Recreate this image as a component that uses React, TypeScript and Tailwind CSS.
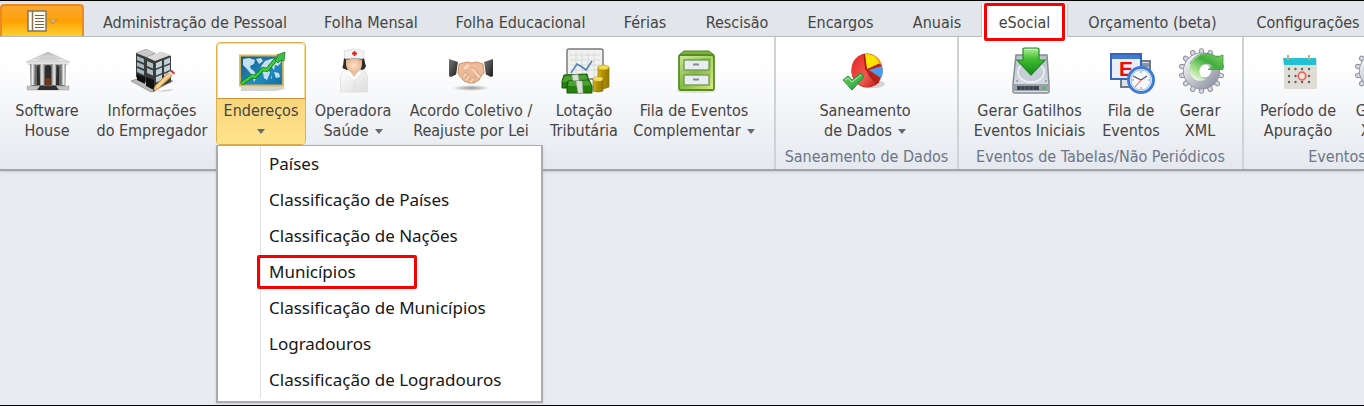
import type { ReactNode } from "react";
import clsx from "clsx";

const tabs = [
  { label: "Administração de Pessoal", width: "w-[220px]" },
  { label: "Folha Mensal", width: "w-[132px]" },
  { label: "Folha Educacional", width: "w-[167px]" },
  { label: "Férias", width: "w-[82px]" },
  { label: "Rescisão", width: "w-[102px]" },
  { label: "Encargos", width: "w-[105px]" },
  { label: "Anuais", width: "w-[88px]" },
  { label: "eSocial", width: "w-[87px]", active: true },
  { label: "Orçamento (beta)", width: "w-[169px]" },
  { label: "Configurações", width: "w-[142px]" },
];

const menuItems = [
  "Países",
  "Classificação de Países",
  "Classificação de Nações",
  "Municípios",
  "Classificação de Municípios",
  "Logradouros",
  "Classificação de Logradouros",
];

function Svg({ children }: { children: ReactNode }) {
  return (
    <svg width="48" height="48" viewBox="0 0 48 48" className="overflow-visible" aria-hidden="true">
      {children}
    </svg>
  );
}

function BankIcon() {
  return (
    <Svg>
      <defs>
        <linearGradient id="column" x1="0" x2="1">
          <stop offset="0" stopColor="#777" />
          <stop offset=".5" stopColor="#ececec" />
          <stop offset="1" stopColor="#8a8a8a" />
        </linearGradient>
        <linearGradient id="roof" x1="0" y1="0" x2="0" y2="1">
          <stop offset="0" stopColor="#b5b5b5" />
          <stop offset="1" stopColor="#f0f0f0" />
        </linearGradient>
      </defs>
      <path d="M8 17h34v23H8z" fill="#6b6b6b" />
      <path d="M14 20q3-5 6 0v18h-6zM22 20q3-5 6 0v18h-6zM30 20q3-5 6 0v18h-6z" fill="#2c2c2c" />
      <path d="M22.500 31h5v9h-5z" fill="#743617" />
      <path d="M25 5 47 15H3z" fill="url(#roof)" stroke="#c4c4c4" strokeWidth=".6" />
      <path d="M12 13.500 25 7.500l13 6z" fill="#cfcfcf" />
      <path d="M5 14.500h40v3H5z" fill="#e2e2e2" stroke="#bbb" strokeWidth=".4" />
      {[7, 16.500, 28.500, 38].map((x) => (
        <path key={x} d={`M${x} 17h5l-.5 21h-4z`} fill="url(#column)" />
      ))}
      <path d="M4 39h42v4H4z" fill="#c2c2c2" stroke="#999" strokeWidth=".5" />
      <path d="M17 39h16l3 4H14z" fill="#303030" />
    </Svg>
  );
}

function BuildingIcon() {
  return (
    <Svg>
      <path d="m3 34 20-7 22 7-22 11z" fill="#bcbcbc" stroke="#777" strokeWidth=".6" />
      <path d="m8 6 10-4 9 4v28l-4 4-15-8z" fill="#3c3c3c" />
      <path d="m8 6 10-4 10 4-10 4z" fill="#c9c9c9" />
      <path d="m9 9 7 3v4l-7-3zM9 15l7 3v4l-7-3zM9 21l7 3v4l-7-3z" fill="#a3b9c1" />
      <path d="m18 11 16-6 9 4v26L26 43l-8-5z" fill="#3c3c3c" />
      <path d="m18 10 15-5.500L43 8l-16 6z" fill="#dadada" />
      <path d="m19 14 6 2.500v5L19 19zM19 21l6 2.500v5L19 26z" fill="#b0bdc2" />
      <path d="m28 16 6-2.400v5.500L28 21.500zM36 13l6-2.400v5.500L36 18.500zM28 23l6-2.400v5.500L28 28.500zM36 20l6-2.400v5.500L36 25.500zM28 30l6-2.400v5.500L28 35.500zM36 27l6-2.400v5.500L36 32.500z" fill="#bfd2d8" />
      <path d="m18 30 8 3v10l-8-4zM9 27l8 3v7l-8-4z" fill="#111" />
      <path d="m29 45 13-1 4-2-10 1z" fill="#ccc" />
      <path d="M25 45 27 39 40 26l4 3-14 13z" fill="#edbd72" stroke="#b78142" strokeWidth=".7" />
      <path d="m28.500 40.500 13-13" stroke="#ffe0aa" strokeWidth="1.200" />
      <path d="m40 26 2-2 4 3-2 2z" fill="#ddd" />
      <path d="m42 24 2-1 3 3-1 1.500z" fill="#ed2739" />
      <path d="m25 45 .7-2.400 1.500 1.200z" fill="#444" />
    </Svg>
  );
}

function MapIcon() {
  return (
    <Svg>
      <defs>
        <linearGradient id="sea" x1="0" y1="0" x2="1" y2="1">
          <stop offset="0" stopColor="#14598e" />
          <stop offset=".6" stopColor="#238abf" />
          <stop offset="1" stopColor="#0f6fa4" />
        </linearGradient>
      </defs>
      <path d="m4 40 42-2 2 4-9 2H4z" fill="#000" opacity=".17" />
      <path d="M3 8.500h43v30H3z" fill="url(#sea)" stroke="#e0b552" strokeWidth="1.800" />
      <path d="m6 12 6-1 6 2-1 4-4 2 1 3 3 2 3 6-3 5-2-7-5-6-4-4zM19 12l5-1 2 3-4 3zM25 18l3-4 6-2 8-1 2 4-3 4-3-1-1 5-3-4-3 2 2 5-3 7-3-2-1-5-3-3zM37 25l5 1 1 4-4 1zM34 28l1 3-1 1z" fill="#c4e0ee" />
      <path d="m4 37 11-8 3 1 8-8 4 1 10-12" fill="none" stroke="#14791e" strokeWidth="4" strokeLinejoin="round" />
      <path d="m4 37 11-8 3 1 8-8 4 1 10-12" fill="none" stroke="#40cf37" strokeWidth="2.400" strokeLinejoin="round" />
      <path d="m40 8 8-3-1 9-3-1-3 3-3-3 3-4z" fill="#3dbf45" stroke="#1c7a2b" strokeWidth=".8" />
    </Svg>
  );
}

function NurseIcon() {
  return (
    <Svg>
      <defs>
        <linearGradient id="coat" x1="0" y1="0" x2="1" y2="1">
          <stop offset="0" stopColor="#fff" />
          <stop offset="1" stopColor="#dcdcdc" />
        </linearGradient>
        <radialGradient id="face">
          <stop offset="0" stopColor="#fde1ca" />
          <stop offset="1" stopColor="#e5b792" />
        </radialGradient>
      </defs>
      <path d="M15 11h20l1 5 1 3-3 4H17l-3-4z" fill="#302b29" />
      <circle cx="15.500" cy="20" r="2" fill="#302b29" />
      <circle cx="34.500" cy="20" r="2" fill="#302b29" />
      <path d="M11.500 45V30q0-6 7-7l13-.2q7 .7 7 7.200v15z" fill="url(#coat)" stroke="#ddd" strokeWidth=".7" />
      <path d="m20 22 5 9 5-9z" fill="#edc5a5" />
      <path d="M17 13q8-3 16 0v5q-1 7-8 8-7-1-8-8z" fill="url(#face)" />
      <path d="m15 4 10-2 10 2-1 8q-9-1.500-18 0z" fill="#f4f4f4" stroke="#cecece" strokeWidth=".6" />
      <path d="M23 6.500h5M25.500 4v5" stroke="#eb1d19" strokeWidth="1.800" />
      <path d="m19 25 6 7 6-7" fill="none" stroke="#fff" strokeWidth="2" />
      <path d="M25 32v13" stroke="#e2e2e2" />
      <circle cx="26" cy="38" r=".6" fill="#c5bf9a" />
    </Svg>
  );
}

function HandshakeIcon() {
  return (
    <Svg>
      <defs>
        <radialGradient id="shadow">
          <stop offset="0" stopColor="#555" stopOpacity=".6" />
          <stop offset="1" stopColor="#555" stopOpacity="0" />
        </radialGradient>
        <linearGradient id="sleeve" x1="0" y1="0" x2="1" y2="1">
          <stop offset="0" stopColor="#777" />
          <stop offset="1" stopColor="#1c1c1e" />
        </linearGradient>
      </defs>
      <ellipse cx="24" cy="41" rx="19" ry="3" fill="url(#shadow)" />
      <path d="m2 12 9 3-1 12-6 3-2-1z" fill="url(#sleeve)" />
      <path d="m46 12-9 3 1 12 6 3 2-1z" fill="url(#sleeve)" />
      <path d="m11 15 2 1-2 11-2 1zM37 15l-2 1 2 11 2 1z" fill="#fafafa" />
      <path d="m12 17 8-2 5 1 5-1 6 2 1 9-3 3-2 4-5 3h-5l-5-2-5-6-1-3z" fill="#edbb99" stroke="#be8058" strokeWidth=".8" />
      <path d="m20 16-5 5 3 3 6-4 5 3 5 6-2 3" fill="#f7d2b7" stroke="#d49b77" strokeWidth=".7" />
      <path d="m15 29 4-4 2 2-3 4M18 32l4-5 2 2-3 5M22 34l4-4 2 2-3 4M26 27l5 5M29 24l5 5" fill="#f5cdae" stroke="#cf9670" strokeWidth=".7" />
    </Svg>
  );
}

function MoneyIcon() {
  return (
    <Svg>
      <defs>
        <linearGradient id="coin" x1="0" x2="1">
          <stop offset="0" stopColor="#d4b415" />
          <stop offset=".4" stopColor="#b39205" />
          <stop offset="1" stopColor="#94780a" />
        </linearGradient>
      </defs>
      <rect x="7" y="2" width="36" height="30" rx="2" fill="#f1f2ef" stroke="#777b7a" strokeWidth="1.500" />
      <path d="M10 8h30M10 13h30M10 18h30M10 23h30M16 5v25M22 5v25M28 5v25M34 5v25" stroke="#d2d6d2" strokeWidth=".8" />
      <path d="m11 26 6-9 5 3 4 3 6-9" fill="none" stroke="#5283bc" strokeWidth="1.600" />
      <path d="M38 20h11v20q-5 3-11 1z" fill="url(#coin)" stroke="#87700d" strokeWidth=".7" />
      <ellipse cx="43.500" cy="20.500" rx="5.500" ry="2.500" fill="#f0d94b" stroke="#b6941a" strokeWidth=".6" />
      <path d="M33 32h10v12q-5 2-10 0z" fill="url(#coin)" stroke="#87700d" strokeWidth=".7" />
      <ellipse cx="38" cy="32" rx="5" ry="2.300" fill="#f5e16a" stroke="#b6941a" strokeWidth=".6" />
      <path d="m4 28 23-1 2 8v6H2v-7z" fill="#268111" stroke="#155707" />
      <path d="m5 29 21-1 2 6-26 1z" fill="#4ba231" />
      <path d="m8 34 21-1 3 6v7H7v-8z" fill="#268111" stroke="#155707" />
      <path d="m9 34 19-.5 3 5-23 .5z" fill="#4ba231" />
      <path d="m12 28 6-.5 1 6h-6zM16 34h6l1 12h-5z" fill="#dedfd8" stroke="#a8aaa0" strokeWidth=".5" />
    </Svg>
  );
}

function CabinetIcon() {
  return (
    <Svg>
      <defs>
        <linearGradient id="cabinet" x1="0" y1="0" x2="1" y2="1">
          <stop offset="0" stopColor="#cee8a1" />
          <stop offset=".48" stopColor="#83ba3f" />
          <stop offset="1" stopColor="#e1e884" />
        </linearGradient>
      </defs>
      <ellipse cx="26" cy="44" rx="20" ry="2" fill="#000" opacity=".1" />
      <path d="m9 8 5-4h25l5 4z" fill="#80b438" stroke="#4f8521" />
      <rect x="9" y="8" width="35" height="35" rx="1.500" fill="url(#cabinet)" stroke="#568e25" strokeWidth="1.800" />
      <path d="M11 10h31v31" fill="none" stroke="#d1e79b" />
      {[13, 28].map((y) => (
        <g key={y}>
          <rect x="14" y={y} width="25" height="10" fill="#e8edf1" stroke="#769d56" strokeWidth="1.400" />
          <path d={`M23 ${y + 4.500}h6`} stroke="#868e94" strokeWidth="1.800" />
        </g>
      ))}
    </Svg>
  );
}

function PieIcon() {
  return (
    <Svg>
      <defs>
        <linearGradient id="pieRed" x1="0" y1="0" x2="1" y2="1">
          <stop offset="0" stopColor="#df211d" />
          <stop offset=".6" stopColor="#f15b52" />
          <stop offset="1" stopColor="#b71910" />
        </linearGradient>
        <linearGradient id="tick" x1="0" y1="0" x2="1" y2="1">
          <stop offset="0" stopColor="#77d26b" />
          <stop offset="1" stopColor="#199d32" />
        </linearGradient>
      </defs>
      <ellipse cx="33" cy="37" rx="11" ry="4" fill="#000" opacity=".15" />
      <ellipse cx="26" cy="23.500" rx="15.500" ry="17" fill="#c32117" />
      <path d="M23 7Q11 10 10.500 23T24 40q8 1 13-4L24 22z" fill="url(#pieRed)" />
      <path d="m24 7 2 15 13-6q-4-10-15-9z" fill="#f9e500" />
      <path d="m32 8q6 2 9 10l-3-1q-1-5-6-9z" fill="#f59b16" />
      <path d="m28 23 13-4q2 7-1 12z" fill="#4a9aed" />
      <path d="m25 25 14 8-4 5z" fill="#b8251a" />
      <path d="m23 7 2 16 13 13" fill="none" stroke="#9e160e" />
      <path d="m2 33 5-4 4 4 9-7 3 4-12 13z" fill="url(#tick)" stroke="#24943a" />
      <path d="m4 33 3-2 4 4 9-7" fill="none" stroke="#b8e8ac" />
    </Svg>
  );
}

function DriveIcon() {
  return (
    <Svg>
      <defs>
        <linearGradient id="drive" x1="0" y1="0" x2="0" y2="1">
          <stop offset="0" stopColor="#b8bfc8" />
          <stop offset="1" stopColor="#dde3eb" />
        </linearGradient>
        <linearGradient id="arrow" x1="0" y1="0" x2="0" y2="1">
          <stop offset="0" stopColor="#b5ee9d" />
          <stop offset=".4" stopColor="#43be31" />
          <stop offset="1" stopColor="#138817" />
        </linearGradient>
      </defs>
      <path d="m10 8 31 0 2 29v8q0 1-2 1H9q-2 0-2-1v-8z" fill="url(#drive)" stroke="#858c97" strokeWidth="1.500" />
      <ellipse cx="25" cy="25" rx="13" ry="10" fill="#c7ced8" stroke="#f0f4f9" strokeWidth="1.500" />
      <path d="M8 37h34v7H8z" fill="#9ba2ac" />
      <path d="M11 39h22v4H11z" fill="#40464e" />
      <path d="M15 39v4M19 39v4M23 39v4M27 39v4" stroke="#747e89" strokeWidth=".6" />
      <circle cx="38" cy="41" r="1.500" fill="#31c736" />
      <circle cx="11" cy="34" r="1" fill="#8d96a1" />
      <circle cx="40" cy="34" r="1" fill="#8d96a1" />
      <path d="M17 2q0-1 2-1h12q2 0 2 1v11h6L25 28 11 13h6z" fill="url(#arrow)" stroke="#238d29" strokeWidth="1.200" />
      <path d="M18.500 2.500h13" stroke="#d5f6c8" />
    </Svg>
  );
}

function QueueIcon() {
  return (
    <Svg>
      <path d="M14 14h29v26H14z" fill="#dce0e8" stroke="#6f798a" strokeWidth="2" />
      <path d="M16 16h26v4H16z" fill="#8793a6" />
      <path d="M4 7h30v25H4z" fill="#e8effa" stroke="#3565bd" strokeWidth="2" />
      <path d="M5 8h28v4H5z" fill="#4379cf" />
      <text x="12" y="29" fontFamily="Liberation Sans, sans-serif" fontSize="21" fontWeight="700" fill="#f20808">
        E
      </text>
      <circle cx="34" cy="33" r="12.500" fill="#f7f8fa" stroke="#3f7bd5" strokeWidth="3" />
      <circle cx="34" cy="33" r="10" fill="none" stroke="#9ec1ee" />
      <path d="m34 33-8-4M34 33l6-4" stroke="#4c5569" strokeWidth="1.300" />
      <path d="m34 33-6 7" stroke="#f34848" />
      <path d="M34 24v2M34 40v2M25 33h2M41 33h2" stroke="#8290a5" />
    </Svg>
  );
}

const teeth = Array.from({ length: 14 }, (_, i) => (i * 360) / 14);

function GearIcon() {
  return (
    <Svg>
      <defs>
        <linearGradient id="gear" x1="0" y1="0" x2="1" y2="1">
          <stop offset="0" stopColor="#eef0f4" />
          <stop offset="1" stopColor="#9698a7" />
        </linearGradient>
        <linearGradient id="turn" x1="0.100" y1="1" x2="0.900" y2="0">
          <stop offset="0" stopColor="#fff" />
          <stop offset=".3" stopColor="#a5df8c" />
          <stop offset=".65" stopColor="#3fae3c" />
          <stop offset="1" stopColor="#7acb63" />
        </linearGradient>
      </defs>
      {teeth.map((angle) => (
        <path
          key={angle}
          d="m23 9 .5-6.500q2-2 4 0L28 9z"
          fill="#d6d7de"
          stroke="#8f919d"
          transform={`rotate(${angle} 25.500 24)`}
        />
      ))}
      <circle cx="25.500" cy="24" r="12.500" fill="none" stroke="#8c8e9b" strokeWidth="12" />
      <circle cx="25.500" cy="24" r="12.500" fill="none" stroke="url(#gear)" strokeWidth="10.500" />
      <circle cx="28.500" cy="24" r="6.500" fill="#fff" />
      <path d="m41 10 6-2v14.500H32l4-4q-4-3-9-1-4 3-3.500 8 1 5 6.500 7-10 4-15-4-4-9 3-16 10-9 23-3z" fill="url(#turn)" />
      <path d="M14 17q3-7 10-9.500 9-3 17 2.500l6-2v14.500H32" fill="none" stroke="#3a9c38" strokeWidth=".8" />
    </Svg>
  );
}

function CalendarIcon() {
  return (
    <Svg>
      <rect x="10" y="11" width="33" height="31" rx="2" fill="#dfddd5" />
      <path d="M9 11h33v7H10z" fill="#22bfd5" />
      <path d="M14 8v5M35 8v5" stroke="#c7ae6c" strokeWidth="2" />
      {[22, 29, 35].map((y) =>
        [15, 21.500, 28, 35].map((x) => <circle key={`${x}-${y}`} cx={x} cy={y} r="1.200" fill="#626263" />),
      )}
      <circle cx="28" cy="29" r="3.800" fill="#eee6df" stroke="#f06560" strokeWidth="1.800" />
    </Svg>
  );
}

function Caret() {
  return (
    <svg width="8" height="5" viewBox="0 0 8 5" aria-hidden="true">
      <path d="M0 0h8L4 5z" fill="#656b72" />
    </svg>
  );
}

type RibbonButtonProps = {
  icon: ReactNode;
  lines: [string, string?];
  width: string;
  caret?: boolean;
  selected?: boolean;
};

function RibbonButton({ icon, lines, width, caret, selected }: RibbonButtonProps) {
  return (
    <button
      type="button"
      aria-expanded={selected}
      className={clsx(
        "flex shrink-0 flex-col overflow-hidden rounded border",
        width,
        selected ? "border-[#dfb04a] bg-white" : "border-transparent",
      )}
    >
      <span
        className={clsx(
          "flex h-[55px] w-full items-center justify-center",
          selected && "rounded-t border border-b-0 border-[#f7dc8c]",
        )}
      >
        {icon}
      </span>
      <span
        className={clsx(
          "flex h-[46px] w-full flex-col items-center border-t pt-[2px] leading-5 whitespace-nowrap",
          selected ? "border-[#c8963a] bg-linear-to-b from-[#f8d57d] to-[#ffe48d]" : "border-transparent",
        )}
      >
        <span>{lines[0]}</span>
        <span className="flex h-5 items-center gap-1.5">
          {lines[1]}
          {caret && <Caret />}
        </span>
      </span>
    </button>
  );
}

function RibbonGroup({ label, className, children }: { label?: string; className: string; children: ReactNode }) {
  return (
    <section
      className={clsx(
        "flex shrink-0 flex-col border-r-2 border-[#cfd3d8] bg-linear-to-b from-white from-20% to-[#e5e8ee] pt-[5px]",
        className,
      )}
    >
      <div className="flex">{children}</div>
      {label && <h2 className="text-center leading-6 whitespace-nowrap text-[#6d7588]">{label}</h2>}
    </section>
  );
}

function AddressMenu() {
  return (
    <ul className="absolute top-full left-0 z-10 w-[327px] border-2 border-t border-[#a9adb2] bg-white pb-[3px] font-['Noto_Sans',sans-serif] text-[17px] text-[#161616] shadow-sm">
      {menuItems.map((item) => (
        <li key={item} className="relative ml-[42px] border-l border-[#dfe1e4]">
          <button type="button" className="h-9 w-full pl-2 text-left">
            {item}
          </button>
          {item === "Municípios" && (
            <span className="pointer-events-none absolute inset-y-px -left-1 w-40 rounded-xs border-3 border-[#f90000]" />
          )}
        </li>
      ))}
    </ul>
  );
}

export default function App() {
  return (
    <div className="min-h-screen overflow-x-clip border-y border-black bg-[#e8ebf0] font-['DejaVu_Sans_Condensed','DejaVu_Sans',sans-serif] text-base text-[#444]">
      <nav className="flex h-9 border-b border-[#b9bec4] bg-[#e2e5e9]">
        <button
          type="button"
          aria-label="Menu"
          className="mt-[3px] mr-px flex w-[84px] shrink-0 items-center justify-center gap-0.5 rounded-t border-2 border-b-0 border-[#ed8920] bg-linear-to-b from-[#fba82a] via-[#fda000] to-[#fdd02d]"
        >
          <svg width="20" height="22" viewBox="0 0 20 22" aria-hidden="true">
            <path d="M1 1h18v20H1z" fill="#fffaf0" stroke="#82765b" strokeWidth="1.500" />
            <path d="M5.500 1v20" stroke="#82765b" strokeWidth="1.500" />
            <path d="M8 5.500h9M8 8.500h9M8 11.500h9M8 14.500h9M8 17.500h9" stroke="#6b6350" />
          </svg>
          <svg width="8" height="5" viewBox="0 0 8 5" aria-hidden="true">
            <path d="M0 0h8L4 5z" fill="#c9b894" stroke="#a67a28" strokeWidth=".6" />
          </svg>
        </button>
        {tabs.map((tab) => (
          <a
            key={tab.label}
            href="#"
            aria-current={tab.active ? "page" : undefined}
            className={clsx(
              "relative flex shrink-0 items-center justify-center whitespace-nowrap",
              tab.width,
              tab.active ? "-mb-px mt-[3px] border-x border-[#c3c8ce] bg-white pt-1" : "pt-2",
            )}
          >
            {tab.label}
            {tab.active && (
              <span className="pointer-events-none absolute inset-x-0.5 -top-px -bottom-1 z-10 rounded-xs border-3 border-[#f90000]" />
            )}
          </a>
        ))}
      </nav>

      <main>
        <div className="flex h-[134px] border-b-2 border-[#a0a5aa] shadow">
          <RibbonGroup className="w-[776px] pl-1.5">
            <RibbonButton icon={<BankIcon />} lines={["Software", "House"]} width="w-[82px]" />
            <RibbonButton icon={<BuildingIcon />} lines={["Informações", "do Empregador"]} width="w-[128px]" />
            <div className="relative">
              <RibbonButton icon={<MapIcon />} lines={["Endereços"]} width="w-[90px]" caret selected />
              <AddressMenu />
            </div>
            <RibbonButton icon={<NurseIcon />} lines={["Operadora", "Saúde"]} width="w-[94px]" caret />
            <RibbonButton icon={<HandshakeIcon />} lines={["Acordo Coletivo /", "Reajuste por Lei"]} width="w-[142px]" />
            <RibbonButton icon={<MoneyIcon />} lines={["Lotação", "Tributária"]} width="w-[84px]" />
            <RibbonButton icon={<CabinetIcon />} lines={["Fila de Eventos", "Complementar"]} width="w-[136px]" caret />
          </RibbonGroup>
          <RibbonGroup label="Saneamento de Dados" className="w-[183px]">
            <RibbonButton icon={<PieIcon />} lines={["Saneamento", "de Dados"]} width="w-[178px]" caret />
          </RibbonGroup>
          <RibbonGroup label="Eventos de Tabelas/Não Periódicos" className="w-[285px] px-1.5">
            <RibbonButton icon={<DriveIcon />} lines={["Gerar Gatilhos", "Eventos Iniciais"]} width="w-[129px]" />
            <RibbonButton icon={<QueueIcon />} lines={["Fila de", "Eventos"]} width="w-[74px]" />
            <RibbonButton icon={<GearIcon />} lines={["Gerar", "XML"]} width="w-[64px]" />
          </RibbonGroup>
          <RibbonGroup label="Eventos" className="w-[180px] pl-2">
            <RibbonButton icon={<CalendarIcon />} lines={["Período de", "Apuração"]} width="w-[92px]" />
            <RibbonButton icon={<GearIcon />} lines={["Gerar", "XML"]} width="w-[64px]" />
          </RibbonGroup>
        </div>
      </main>
    </div>
  );
}
